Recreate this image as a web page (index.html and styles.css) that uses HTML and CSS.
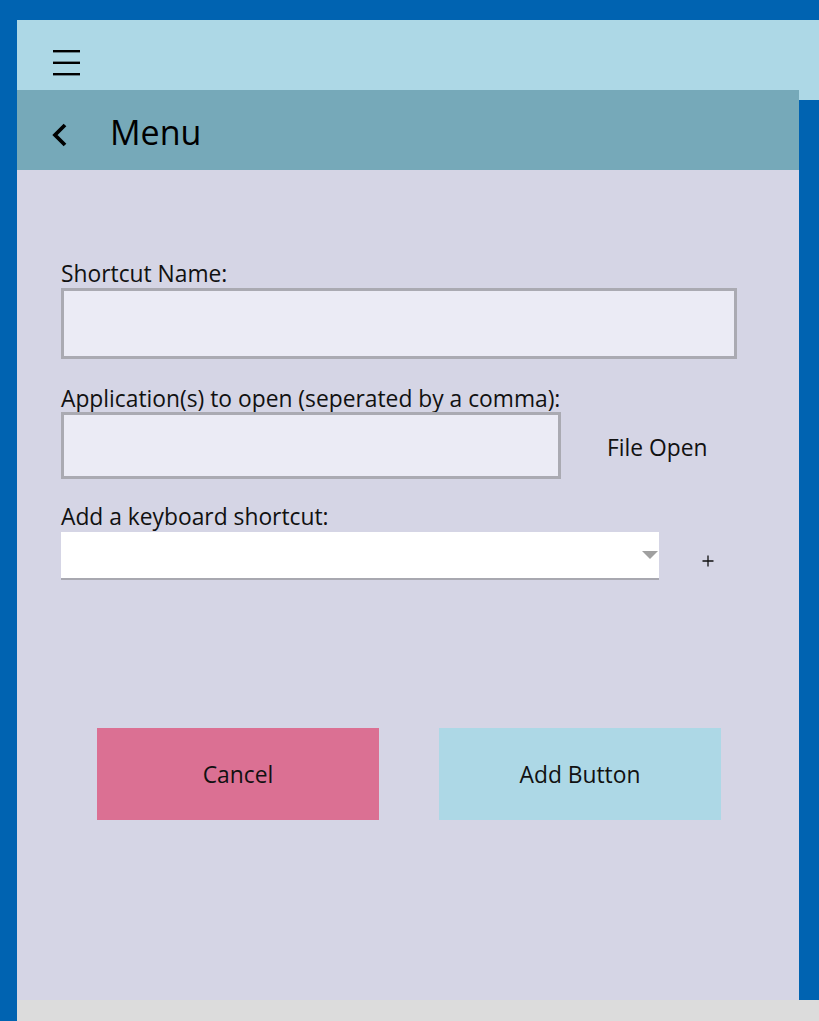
FILE: index.html
```html
<!DOCTYPE html>
<html>
<head>
<meta charset="utf-8">
<link rel="stylesheet" href="styles.css">
</head>
<body>
<div class="app">
  <div class="topbar">
    <svg class="hamburger" width="28" height="26" viewBox="0 0 28 26">
      <rect x="0" y="0" width="27" height="2.4" fill="#000"/>
      <rect x="0" y="11.6" width="27" height="2.4" fill="#000"/>
      <rect x="0" y="23" width="27" height="2.4" fill="#000"/>
    </svg>
  </div>
  <div class="pane">
    <div class="pane-header">
      <svg class="back" width="17" height="24" viewBox="0 0 17 24">
        <path d="M14 2 L4 12 L14 22" fill="none" stroke="#000" stroke-width="3.8"/>
      </svg>
      <span class="title">Menu</span>
    </div>
    <div class="form">
      <label class="label l1">Shortcut Name:</label>
      <div class="textbox tb1"></div>
      <label class="label l2">Application(s) to open (seperated by a comma):</label>
      <div class="row">
        <div class="textbox tb2"></div>
        <span class="file-open">File Open</span>
      </div>
      <label class="label l3">Add a keyboard shortcut:</label>
      <div class="row">
        <div class="combo">
          <svg class="arrow" width="16" height="8" viewBox="0 0 16 8">
            <polygon points="0,0 16,0 8,8" fill="#A0A0A0"/>
          </svg>
        </div>
        <svg class="plus" width="12" height="12" viewBox="0 0 12 12">
          <path d="M6 0.5 V11.5 M0.5 6 H11.5" stroke="#111" stroke-width="1.3"/>
        </svg>
      </div>
      <div class="buttons">
        <div class="btn cancel">Cancel</div>
        <div class="btn add">Add Button</div>
      </div>
    </div>
  </div>
  <div class="bottombar"></div>
</div>
</body>
</html>
```

FILE: styles.css
```css
html, body {
  margin: 0;
  padding: 0;
}
body {
  background: #0063B1;
  font-family: "Open Sans", "Noto Sans", sans-serif;
  color: #111;
  height: 1021px;
  overflow: hidden;
}
.app {
  display: flex;
  flex-direction: column;
  height: 1021px;
  padding: 20px 0 0 17px;
  box-sizing: border-box;
}
.topbar {
  height: 80px;
  flex: 0 0 80px;
  background: #ADD8E6;
  display: flex;
  align-items: flex-start;
  box-sizing: border-box;
  padding: 30px 0 0 36px;
}
.hamburger {
  display: block;
}
.pane {
  margin-top: -10px;
  width: 782px;
  flex: 0 0 910px;
  background: #D5D5E5;
  display: flex;
  flex-direction: column;
}
.pane-header {
  height: 80px;
  flex: 0 0 80px;
  background: #76A9B9;
  display: flex;
  align-items: center;
  box-sizing: border-box;
  padding-left: 34px;
}
.back {
  display: block;
  margin-top: 10px;
}
.title {
  margin-left: 42px;
  font-size: 34px;
  line-height: 40px;
  color: #000;
  margin-top: 4px;
}
.form {
  display: flex;
  flex-direction: column;
  padding: 92px 62px 0 44px;
}
.label {
  display: block;
  font-size: 22.8px;
  line-height: 24px;
  height: 24px;
  margin-left: 0;
  white-space: nowrap;
}
.l1 { margin-bottom: 2px; }
.l2 { margin-top: 28px; margin-bottom: 1px; }
.l3 { margin-top: 26px; margin-bottom: 3px; }
.textbox {
  background: #EBEBF5;
  border: 3px solid #AAAAB2;
  box-sizing: border-box;
}
.tb1 {
  height: 71px;
  width: 676px;
}
.row {
  display: flex;
  align-items: center;
}
.tb2 {
  width: 500px;
  height: 67px;
}
.file-open {
  font-size: 22.8px;
  margin-left: 46px;
  margin-top: 3px;
  white-space: nowrap;
}
.combo {
  width: 598px;
  height: 48px;
  background: #fff;
  border-bottom: 2px solid #A8A8B0;
  box-sizing: border-box;
  display: flex;
  align-items: center;
  justify-content: flex-end;
}
.arrow {
  display: block;
  margin-right: 1px;
  margin-top: 0px;
}
.plus {
  display: block;
  margin-left: 43px;
  margin-top: 9px;
}
.buttons {
  display: flex;
  gap: 60px;
  margin-top: 148px;
  padding-left: 36px;
}
.btn {
  width: 282px;
  height: 92px;
  display: flex;
  align-items: center;
  justify-content: center;
  font-size: 22.8px;
  color: #111;
}
.cancel {
  background: #DB7093;
}
.add {
  background: #ADD8E6;
}
.bottombar {
  flex: 1 1 auto;
  background: #DCDCDC;
}
```
